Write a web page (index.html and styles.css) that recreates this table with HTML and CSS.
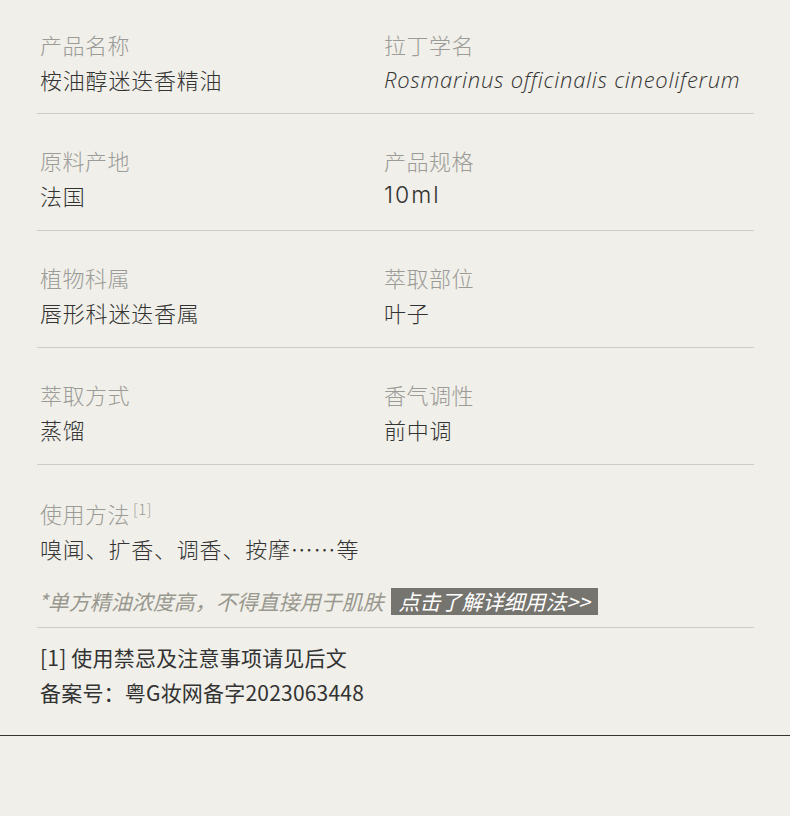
FILE: index.html
```html
<!DOCTYPE html>
<html lang="zh-CN">
<head>
    <meta charset="UTF-8">
    <meta name="viewport" content="width=device-width, initial-scale=1.0">
    <title>产品信息</title>
    <link rel="stylesheet" href="styles.css">
</head>
<body>
    <div class="info">
        <div class="row">
            <div class="cell">
                <div class="label">产品名称</div>
                <div class="value">桉油醇迷迭香精油</div>
            </div>
            <div class="cell">
                <div class="label">拉丁学名</div>
                <div class="value latin">Rosmarinus officinalis cineoliferum</div>
            </div>
        </div>
        <div class="row">
            <div class="cell">
                <div class="label">原料产地</div>
                <div class="value">法国</div>
            </div>
            <div class="cell">
                <div class="label">产品规格</div>
                <div class="value num">10ml</div>
            </div>
        </div>
        <div class="row">
            <div class="cell">
                <div class="label">植物科属</div>
                <div class="value">唇形科迷迭香属</div>
            </div>
            <div class="cell">
                <div class="label">萃取部位</div>
                <div class="value">叶子</div>
            </div>
        </div>
        <div class="row">
            <div class="cell">
                <div class="label">萃取方式</div>
                <div class="value">蒸馏</div>
            </div>
            <div class="cell">
                <div class="label">香气调性</div>
                <div class="value">前中调</div>
            </div>
        </div>
        <div class="row usage">
            <div class="cell">
                <div class="label">使用方法<sup class="ref">[1]</sup></div>
                <div class="value">嗅闻、扩香、调香、按摩……等</div>
                <div class="note">*单方精油浓度高，不得直接用于肌肤 <span class="more">点击了解详细用法&gt;&gt;</span></div>
            </div>
        </div>
        <div class="footnotes">
            <div>[1] 使用禁忌及注意事项请见后文</div>
            <div>备案号：粤G妆网备字2023063448</div>
        </div>
    </div>
    <div class="bottom-line"></div>
</body>
</html>
```

FILE: styles.css
```css
body {
    margin: 0;
    background: #f0efe9;
    font-family: "Noto Sans CJK SC", sans-serif;
    color: #333;
}
.info {
    padding: 0 36px 0 37px;
}
.row {
    display: grid;
    grid-template-columns: 344px 1fr;
    padding: 31px 3px 17px;
    border-bottom: 1px solid #cdccc8;
}
.row:first-child {
    padding-top: 29px;
    padding-bottom: 16px;
}
.label {
    font-size: 22px;
    line-height: 30px;
    color: #9b9b98;
    font-weight: 300;
    letter-spacing: 0.5px;
}
.value {
    margin-top: 3px;
    font-size: 22px;
    line-height: 35px;
    color: #333;
    font-weight: 300;
    letter-spacing: 0.8px;
}
.latin {
    font-family: "Open Sans", sans-serif;
    font-style: italic;
    font-size: 22px;
    letter-spacing: 0.75px;
    white-space: nowrap;
}
.num {
    font-family: "Inter", sans-serif;
    font-size: 23px;
    letter-spacing: 2px;
}
.ref {
    font-size: 15px;
    margin-left: 3px;
    vertical-align: 8px;
    line-height: 0;
}
.usage {
    display: block;
    padding-top: 33px;
    padding-bottom: 12px;
}
.note {
    margin-top: 22px;
    font-size: 21px;
    line-height: 27px;
    color: #99988f;
    font-style: italic;
    margin-left: -2px;
    white-space: nowrap;
}
.more {
    display: inline-block;
    background: #76746e;
    color: #fff;
    padding: 0 8px;
    margin-left: 2px;
}
.footnotes {
    padding: 12px 3px 25px;
    font-size: 21px;
    line-height: 35px;
    color: #333;
    letter-spacing: 0.2px;
}
.bottom-line {
    border-top: 1px solid #333;
}
```
